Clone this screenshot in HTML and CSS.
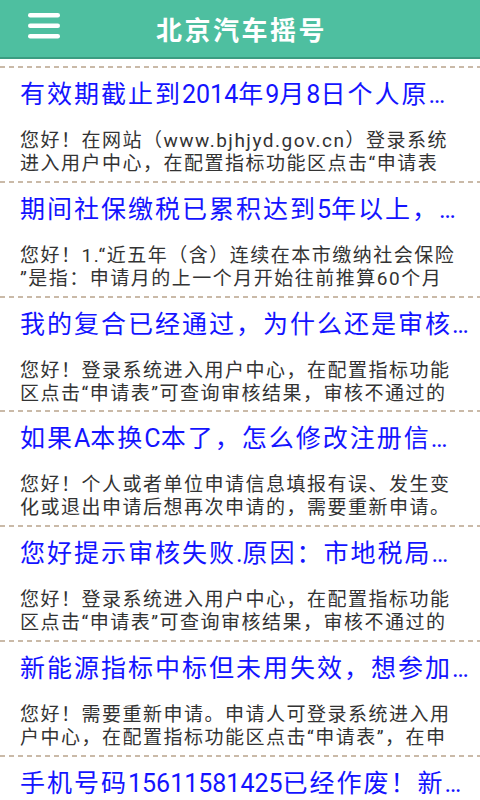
FILE: index.html
```html
<!doctype html>
<html lang="zh-CN">
<head>
    <meta charset="UTF-8">
    <meta name="viewport" content="width=device-width, initial-scale=1.0">
    <title>北京汽车摇号</title>
    <link rel="stylesheet" href="styles.css">
</head>
<body>
    <div class="top">
        <span class="menu">
            <svg width="34" height="28" viewBox="0 0 34 28">
                <rect x="1" y="1" width="32" height="4.5" rx="2.2" fill="#fff"/>
                <rect x="1" y="11.5" width="32" height="4.5" rx="2.2" fill="#fff"/>
                <rect x="1" y="22" width="32" height="4.5" rx="2.2" fill="#fff"/>
            </svg>
        </span>
        <h1>北京汽车摇号</h1>
    </div>
    <ul class="list">
        <li>
            <h2>有效期截止到<i>2014</i>年<i>9</i>月<i>8</i>日个人原…</h2>
            <p>您好！在网站（www.bjhjyd.gov.cn）登录系统<br>进入用户中心，在配置指标功能区点击“申请表</p>
        </li>
        <li>
            <h2>期间社保缴税已累积达到<i>5</i>年以上，…</h2>
            <p>您好！1.“近五年（含）连续在本市缴纳社会保险<br>”是指：申请月的上一个月开始往前推算60个月</p>
        </li>
        <li>
            <h2>我的复合已经通过，为什么还是审核…</h2>
            <p>您好！登录系统进入用户中心，在配置指标功能<br>区点击“申请表”可查询审核结果，审核不通过的</p>
        </li>
        <li>
            <h2>如果<i>A</i>本换<i>C</i>本了，怎么修改注册信…</h2>
            <p>您好！个人或者单位申请信息填报有误、发生变<br>化或退出申请后想再次申请的，需要重新申请。</p>
        </li>
        <li>
            <h2>您好提示审核失败<i>.</i>原因：市地税局…</h2>
            <p>您好！登录系统进入用户中心，在配置指标功能<br>区点击“申请表”可查询审核结果，审核不通过的</p>
        </li>
        <li>
            <h2>新能源指标中标但未用失效，想参加…</h2>
            <p>您好！需要重新申请。申请人可登录系统进入用<br>户中心，在配置指标功能区点击“申请表”，在申</p>
        </li>
        <li>
            <h2>手机号码<i>15611581425</i>已经作废！新…</h2>
            <p>您好！</p>
        </li>
    </ul>
</body>
</html>
```

FILE: styles.css
```css
*{
    margin: 0;
    padding: 0;
    list-style: none;
    box-sizing: border-box;
}
html,body{
    width: 480px;
    height: 800px;
    overflow: hidden;
    background: #fff;
    font-family: Roboto, "Noto Sans CJK SC", sans-serif;
}
.top{
    height: 59px;
    background: #4ebfa0;
    border-bottom: 2px solid #3b9c81;
    position: relative;
    display: flex;
    align-items: center;
    justify-content: center;
}
.menu{
    position: absolute;
    left: 27px;
    top: 12px;
    display: block;
    line-height: 0;
}
.top h1{
    color: #fff;
    font-size: 26px;
    font-weight: bold;
    letter-spacing: 2.5px;
    margin-left: 3px;
}
.list{
    padding-top: 7px;
}
.list>li{
    height: 114.8px;
    padding: 15px 8px 0 20px;
    background: repeating-linear-gradient(to right, #cabaa8 0 5px, transparent 5px 9px) top left / 100% 2px no-repeat;
}
.list h2{
    font-size: 25px;
    font-weight: normal;
    color: #1414ff;
    letter-spacing: 2px;
    line-height: 28px;
    white-space: nowrap;
    overflow: hidden;
}
.list h2 i{
    font-style: normal;
    letter-spacing: 0;
}
.list p{
    margin-top: 20px;
    font-size: 19px;
    line-height: 23px;
    letter-spacing: 1.5px;
    color: #333;
    white-space: nowrap;
    max-height: 46px;
    overflow: hidden;
}
```
